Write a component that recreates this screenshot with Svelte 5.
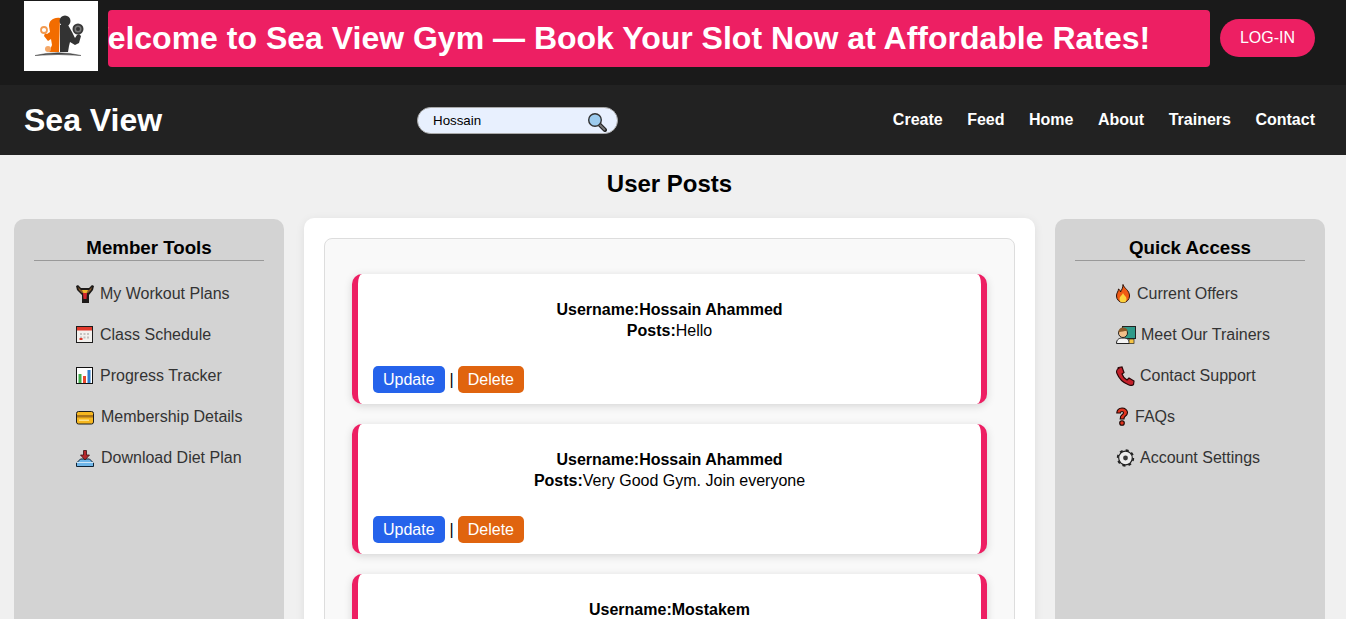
<script>
	const links = ['Create', 'Feed', 'Home', 'About', 'Trainers', 'Contact'];
	const tools = [
		{ id: 'dumbbell', label: 'My Workout Plans', w: 20 },
		{ id: 'calendar', label: 'Class Schedule', w: 20 },
		{ id: 'chart', label: 'Progress Tracker', w: 20 },
		{ id: 'card', label: 'Membership Details', w: 21 },
		{ id: 'download', label: 'Download Diet Plan', w: 21 }
	];
	const quick = [
		{ id: 'fire', label: 'Current Offers', w: 17 },
		{ id: 'trainer', label: 'Meet Our Trainers', w: 21 },
		{ id: 'phone', label: 'Contact Support', w: 20 },
		{ id: 'question', label: 'FAQs', w: 15 },
		{ id: 'gear', label: 'Account Settings', w: 20 }
	];
	const posts = [
		{ user: 'Hossain Ahammed', text: 'Hello' },
		{ user: 'Hossain Ahammed', text: 'Very Good Gym. Join everyone' },
		{ user: 'Mostakem', text: 'Nice' }
	];
</script>

{#snippet icon(id, w)}
	<svg class="icon" width={w} height="20" viewBox="0 0 {w} 20" aria-hidden="true">
		{#if id === 'dumbbell'}
			<path d="M0 2l2-1 3 3h8l3-3 2 1-1 4-4 5v8H6v-8L1 6z" fill="#1d1a18" />
			<path d="M2 3l3 3h8l3-3-1 3-3 3H6L3 6z" fill="#8a5a2c" />
			<path d="M6 6h6l-1.500 3h-3z" fill="#f0b62e" />
			<path d="M7 9h4l-.5 6h-3z" fill="#d2272e" />
		{:else if id === 'calendar'}
			<rect x=".5" y="1.500" width="16" height="16" fill="#f3f1ee" stroke="#1c1c1c" />
			<rect x="1" y="2" width="15" height="3.500" fill="#e2392b" />
			<path d="M4 8h2v2H4zM7.500 8h2v2h-2zM11 8h2v2h-2zM4 11.500h2v2H4zM7.500 11.500h2v2h-2zM11 11.500h2v2h-2z" fill="#c4c2c0" />
			<rect x="3.500" y="13" width="3" height="2" fill="#e2392b" />
		{:else if id === 'chart'}
			<rect x=".5" y="1.500" width="16" height="16" fill="#fff" stroke="#111" />
			<rect x="2.500" y="8" width="3" height="9" fill="#3fae4a" />
			<rect x="7" y="10" width="3" height="7" fill="#e8472e" />
			<rect x="11.500" y="4" width="3" height="13" fill="#2f80d0" />
		{:else if id === 'card'}
			<rect x=".5" y="4.500" width="17" height="12.500" rx="2" fill="#f6b71f" stroke="#1c1c1c" />
			<rect x="1" y="8" width="16" height="2.500" fill="#a8731a" />
			<rect x="3" y="12.500" width="10" height="1.500" fill="#fde18a" />
		{:else if id === 'download'}
			<path d="M.5 18.500v-3.500l4-4h9l4 4v3.500z" fill="#6eb5e8" stroke="#123" />
			<path d="M.5 14.500h17" stroke="#cfe6f7" />
			<path d="M7.500 7V2.500h3V7h3l-4.500 5-4.500-5z" fill="#b5282c" stroke="#3a1012" stroke-width=".8" />
		{:else if id === 'fire'}
			<path d="M7 .5c1 4 6.500 5.500 6.500 11.500a6.500 6.500 0 0 1-13 0c0-3.500 2-4.500 2-7 1 .5 2 1.500 2 3 1-2 2.500-4 2.500-7.500z" fill="#ef5a14" stroke="#2a1005" />
			<path d="M7 9c1 2.500 3.500 3.500 3.500 6a3.500 3.500 0 0 1-7 0c0-2.500 2.500-3.500 3.500-6z" fill="#fcd23c" />
		{:else if id === 'trainer'}
			<rect x="6.500" y="1.500" width="13" height="12" fill="#2f9a8a" stroke="#222" />
			<path d="M.5 18.500c0-4.500 3-5.500 6.500-5.500s6.500 1 6.500 5.500z" fill="#f4f4f4" stroke="#222" />
			<circle cx="7" cy="8" r="4.500" fill="#f2c08a" stroke="#222" />
			<path d="M2.500 7.500c0-3.500 2-5 4.500-5s4.500 1.500 4.500 3.500c-3.500 0-6 .5-9 1.500z" fill="#8a5a28" />
			<rect x="13" y="14" width="5" height="4.500" fill="#f6c445" stroke="#222" stroke-width=".7" />
		{:else if id === 'phone'}
			<path d="M2.500 1.500L6 1l2 5.500-2 1.500c1 3 3 5 5 6l2-2 5 3-.5 3.500c-1 1-3.500 1-5.500 0-5-2-9-6-11-11-1-2 0-4.500 2-5.500z" fill="#c4212b" stroke="#2a0608" stroke-width="1.200" />
		{:else if id === 'question'}
			<path d="M.8 6C.8 3 3 1 6 1s5.500 2 5.500 4.500c0 2-1 3-2.500 4-1 .8-1 1.500-1 2.500H4.200c0-2 .5-3.500 2-4.500 1-.7 1.300-1 1.300-1.800 0-1-.8-1.200-1.500-1.200-1 0-1.500.6-1.500 1.500z" fill="#e0341f" stroke="#1a0503" stroke-width="1.100" />
			<circle cx="6" cy="16" r="2.300" fill="#e0341f" stroke="#1a0503" stroke-width="1.100" />
		{:else if id === 'gear'}
			<circle cx="9.500" cy="10" r="6.800" fill="#ececec" stroke="#222" stroke-width="1.200" />
			<circle cx="9.500" cy="10" r="7.800" fill="none" stroke="#222" stroke-width="1.800" stroke-dasharray="3 3.120" />
			<circle cx="9.500" cy="10" r="2.400" fill="#3a3a3a" />
		{/if}
	</svg>
{/snippet}

{#snippet sidebar(title, items)}
	<aside class="sidebar">
		<h3>{title}</h3>
		<ul>
			{#each items as item}
				<li>{@render icon(item.id, item.w)}<span>{item.label}</span></li>
			{/each}
		</ul>
	</aside>
{/snippet}

<header class="topbar">
	<div class="logo">
		<svg width="74" height="70" viewBox="0 0 74 70" aria-hidden="true">
			<path d="M36 17c-7-1-11 3-11 8l1 6-3 2-2-1-1 3 4 5 3-2 1 6-3 7h10z" fill="#f26c00" />
			<circle cx="20" cy="29" r="3" fill="none" stroke="#f29a50" stroke-width="1.800" />
			<circle cx="24" cy="48" r="3" fill="#f4a868" />
			<circle cx="41" cy="20" r="5.500" fill="#333" />
			<path d="M36 24h8l4 7 3 6 2-3 2-1 2 2-2 7-4 2-5-3-1 4-1 6h-8z" fill="#333" />
			<circle cx="54" cy="28" r="4.500" fill="#777" stroke="#3a3a3a" stroke-width="2" />
			<circle cx="54" cy="28" r="2" fill="#333" />
			<path d="M11 54.500Q34 49 57 54.500 34 52.500 11 54.500z" fill="#444" stroke="#444" stroke-width=".5" />
		</svg>
	</div>
	<div class="marquee"><span>Welcome to Sea View Gym — Book Your Slot Now at Affordable Rates!</span></div>
	<button class="login">LOG-IN</button>
</header>

<nav class="navbar">
	<div class="brand">Sea View</div>
	<div class="search">
		<input value="Hossain" />
		<svg width="20" height="20" viewBox="0 0 20 20" aria-hidden="true">
			<path d="M12 12l6 6" stroke="#222" stroke-width="4" stroke-linecap="round" />
			<path d="M12.500 12.500l5 5" stroke="#777" stroke-width="1.800" stroke-linecap="round" />
			<circle cx="8" cy="8" r="6.300" fill="#9ccbee" stroke="#333" stroke-width="1.400" />
		</svg>
	</div>
	<div class="links">
		{#each links as link}
			<a href="#top">{link}</a>
		{/each}
	</div>
</nav>

<h2 class="title">User Posts</h2>

<main class="layout">
	{@render sidebar('Member Tools', tools)}
	<section class="center">
		<div class="inner">
			{#each posts as post}
				<article class="post">
					<div class="body">
						<div><b>Username:</b><b>{post.user}</b></div>
						<div><b>Posts:</b>{post.text}</div>
					</div>
					<div class="actions">
						<button class="update">Update</button>
						<span>|</span>
						<button class="delete">Delete</button>
					</div>
				</article>
			{/each}
		</div>
	</section>
	{@render sidebar('Quick Access', quick)}
</main>

<style>
	:global(body) {
		margin: 0;
		height: 619px;
		overflow: hidden;
		background: #f0f0f0;
		font-family: 'Liberation Sans', Arial, sans-serif;
		color: #000;
	}

	.topbar {
		display: flex;
		align-items: flex-start;
		height: 85px;
		box-sizing: border-box;
		padding: 1px 31px 0 24px;
		background: #1a1a1a;
	}

	.logo {
		width: 74px;
		height: 70px;
		background: #fff;
		flex: none;
	}

	.marquee {
		flex: 1;
		height: 57px;
		margin: 9px 10px 0;
		background: #ed1f63;
		border-radius: 4px;
		overflow: hidden;
		white-space: nowrap;
		color: #fff;
		font-size: 32px;
		font-weight: 700;
		line-height: 57px;
		text-indent: -30px;
	}

	.login {
		width: 95px;
		height: 38px;
		margin-top: 18px;
		border: none;
		border-radius: 19px;
		background: #ed1f63;
		color: #fff;
		font: 16px 'Liberation Sans', Arial, sans-serif;
		flex: none;
	}

	.navbar {
		display: flex;
		align-items: center;
		justify-content: space-between;
		height: 70px;
		padding: 0 31px 0 24px;
		background: #222;
	}

	.brand {
		color: #fff;
		font-size: 32px;
		font-weight: 700;
		width: 393px;
		flex: none;
	}

	.search {
		display: flex;
		align-items: center;
		width: 201px;
		height: 27px;
		box-sizing: border-box;
		padding: 0 10px 0 15px;
		background: #e8f0fe;
		border: 1px solid #aaa;
		border-radius: 14px;
		flex: none;
	}

	.search input {
		flex: 1;
		min-width: 0;
		border: none;
		outline: none;
		padding: 0;
		background: transparent;
		font: 13.333px 'Liberation Sans', Arial, sans-serif;
		color: #000;
	}

	.search svg {
		margin-top: 4px;
	}

	.links {
		display: flex;
		gap: 24.5px;
		margin-left: auto;
	}

	.links a {
		color: #fff;
		font-size: 16px;
		font-weight: 700;
		text-decoration: none;
	}

	.title {
		margin: 0;
		padding: 15px 7px 20px 0;
		text-align: center;
		font-size: 24px;
		line-height: 28px;
		font-weight: 700;
	}

	.layout {
		display: flex;
		gap: 20px;
		padding: 0 21px 0 14px;
		align-items: flex-start;
	}

	.sidebar {
		width: 270px;
		height: 500px;
		box-sizing: border-box;
		padding: 19px 20px 20px;
		margin-top: 1px;
		background: #d3d3d3;
		border-radius: 10px;
		flex: none;
	}

	.sidebar h3 {
		margin: 0;
		padding-bottom: 2px;
		border-bottom: 1px solid #999;
		text-align: center;
		font-size: 18.72px;
		line-height: 20px;
		font-weight: 700;
	}

	.sidebar ul {
		list-style: none;
		margin: 0;
		padding: 12px 0 0 42px;
	}

	.sidebar:last-child ul {
		padding-left: 41px;
	}

	.sidebar li {
		display: flex;
		align-items: center;
		gap: 4px;
		height: 41px;
		font-size: 16px;
		color: #333;
	}

	.icon {
		flex: none;
	}

	.center {
		flex: 1;
		box-sizing: border-box;
		padding: 20px;
		background: #fff;
		border-radius: 10px;
		box-shadow: 0 2px 10px rgba(0, 0, 0, 0.08);
	}

	.inner {
		display: flex;
		flex-direction: column;
		gap: 20px;
		padding: 35px 27px;
		background: #f9f9f9;
		border: 1px solid #ddd;
		border-radius: 8px;
	}

	.post {
		height: 130px;
		box-sizing: border-box;
		padding: 25px 15px 11px;
		display: flex;
		flex-direction: column;
		justify-content: space-between;
		background: #fff;
		border-left: 6px solid #ed1f63;
		border-right: 6px solid #ed1f63;
		border-radius: 10px;
		box-shadow: 0 2px 8px rgba(0, 0, 0, 0.15);
	}

	.body {
		text-align: center;
		font-size: 16px;
		line-height: 21px;
	}

	.actions {
		display: flex;
		align-items: center;
		gap: 4px;
		font-size: 16px;
	}

	.actions span {
		margin-left: 1px;
	}

	.actions button {
		height: 27px;
		padding: 0 10px;
		border: none;
		border-radius: 5px;
		color: #fff;
		font: 16px 'Liberation Sans', Arial, sans-serif;
	}

	.update {
		background: #2563eb;
	}

	.delete {
		background: #e0640f;
	}
</style>
